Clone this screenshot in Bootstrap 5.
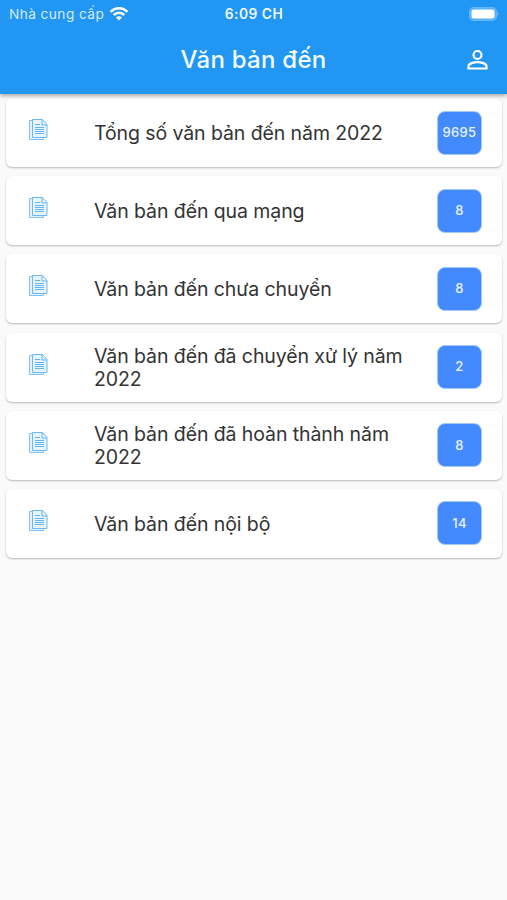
<!DOCTYPE html>
<html lang="vi">
<head>
<meta charset="utf-8">
<meta name="viewport" content="width=device-width, initial-scale=1">
<title>Văn bản đến</title>
<link rel="stylesheet" href="https://cdn.jsdelivr.net/npm/bootstrap@5.3.0/dist/css/bootstrap.min.css">
<style>
body{font-family:Inter,"Noto Sans",sans-serif;background:#fafafa;color:#333;height:900px;overflow:hidden}
.app-head{height:94px;background:#2196f3;box-shadow:0 2px 4px rgba(0,0,0,.32);z-index:2}
.status-row{height:28px;font-size:13.7px;line-height:28px;padding:0 8px 0 9px}
.carrier{color:#d6ecff;letter-spacing:.42px}
.wifi{margin-left:5px;margin-top:-2px}
.clock{font-weight:600;font-size:13.8px;letter-spacing:.5px;color:#eef8ff}
.title-row{height:66px;padding:0 18px}
.app-title{font-size:24px;font-weight:500;line-height:30px;letter-spacing:.25px;color:#f4fbff;margin-top:-2px}
.person{margin-top:-2px}
.doc-list{padding:4.2px 5px 0 6px;gap:9.15px}
.doc-card{height:69px;border:0;border-radius:6px;background:#fff;box-shadow:0 1px 2px rgba(0,0,0,.27)}
.doc-icon{width:20px;margin:-6px 0 0 22px}
.doc-text{width:325px;margin:2px 0 0 46px;font-size:19.5px;line-height:23.3px;letter-spacing:-.09px}
.count-box{width:45px;height:44px;border-radius:8px;background:#448aff;border:1px solid #a5c8f8;color:#e8f2ff;font-size:13px;font-weight:500;letter-spacing:.3px;margin-right:20px}
</style>
<script src="https://cdn.jsdelivr.net/npm/bootstrap@5.3.0/dist/js/bootstrap.bundle.min.js"></script>
</head>
<body>
<svg class="d-none" aria-hidden="true">
  <symbol id="docs" viewBox="0 0 20 23">
    <path d="M4 2.500H1.500v19h14V20" fill="#e3f2fd" stroke="#82c1f5"/>
    <path d="M4.500 1.500h10l4.500 5v13H4.500z" fill="#e6f4ff" stroke="#6bb7f5"/>
    <path d="M14 1.500V7h5M7 6.500h5M7 9.500h9M7 11.500h9M7 13.500h9M7 15.500h9" fill="none" stroke="#64b2f3"/>
  </symbol>
</svg>
<header class="app-head position-relative">
  <div class="status-row row g-0 align-items-center">
    <div class="col d-flex align-items-center">
      <span class="carrier">Nhà cung cấp</span>
      <svg class="wifi" width="20" height="15" viewBox="0 0 20 15" fill="none" stroke="#fff" stroke-width="2.5"><path d="M1.600 5.800a12 12 0 0 1 16.800 0M4.700 9a7.500 7.500 0 0 1 10.600 0"/><path d="M10 14.500l-3-3.100a4.200 4.200 0 0 1 6 0z" fill="#fff" stroke="none"/></svg>
    </div>
    <div class="col-auto clock">6:09 CH</div>
    <div class="col d-flex justify-content-end">
      <svg width="30" height="14" viewBox="0 0 30 14"><rect x=".7" y=".7" width="26.600" height="12.600" rx="3.800" fill="#53aef6" stroke="#6ab9f7" stroke-width="1.200"/><rect x="2.500" y="2.600" width="23" height="8.800" rx="2" fill="#fff"/><path d="M28.400 5v4c1.500-.5 1.500-3.500 0-4z" fill="#7dc1f8"/></svg>
    </div>
  </div>
  <div class="title-row row g-0 align-items-center">
    <div class="col"></div>
    <h1 class="col-auto app-title mb-0">Văn bản đến</h1>
    <div class="col d-flex justify-content-end">
      <svg class="person" width="24" height="24" viewBox="0 0 24 24" fill="none" stroke="#fff" stroke-width="2.200"><circle cx="12.500" cy="7" r="4"/><path d="M3.500 20.500v-2.300c0-2.700 5.600-4.100 9-4.100s9 1.400 9 4.100v2.300z"/></svg>
    </div>
  </div>
</header>
<main class="doc-list d-flex flex-column">
  <div class="doc-card card flex-row align-items-center"><svg class="doc-icon" height="23"><use href="#docs"/></svg><div class="doc-text">Tổng số văn bản đến năm 2022</div><span class="count-box d-flex align-items-center justify-content-center ms-auto">9695</span></div>
  <div class="doc-card card flex-row align-items-center"><svg class="doc-icon" height="23"><use href="#docs"/></svg><div class="doc-text">Văn bản đến qua mạng</div><span class="count-box d-flex align-items-center justify-content-center ms-auto">8</span></div>
  <div class="doc-card card flex-row align-items-center"><svg class="doc-icon" height="23"><use href="#docs"/></svg><div class="doc-text">Văn bản đến chưa chuyển</div><span class="count-box d-flex align-items-center justify-content-center ms-auto">8</span></div>
  <div class="doc-card card flex-row align-items-center"><svg class="doc-icon" height="23"><use href="#docs"/></svg><div class="doc-text">Văn bản đến đã chuyển xử lý năm 2022</div><span class="count-box d-flex align-items-center justify-content-center ms-auto">2</span></div>
  <div class="doc-card card flex-row align-items-center"><svg class="doc-icon" height="23"><use href="#docs"/></svg><div class="doc-text">Văn bản đến đã hoàn thành năm 2022</div><span class="count-box d-flex align-items-center justify-content-center ms-auto">8</span></div>
  <div class="doc-card card flex-row align-items-center"><svg class="doc-icon" height="23"><use href="#docs"/></svg><div class="doc-text">Văn bản đến nội bộ</div><span class="count-box d-flex align-items-center justify-content-center ms-auto">14</span></div>
</main>
</body>
</html>
